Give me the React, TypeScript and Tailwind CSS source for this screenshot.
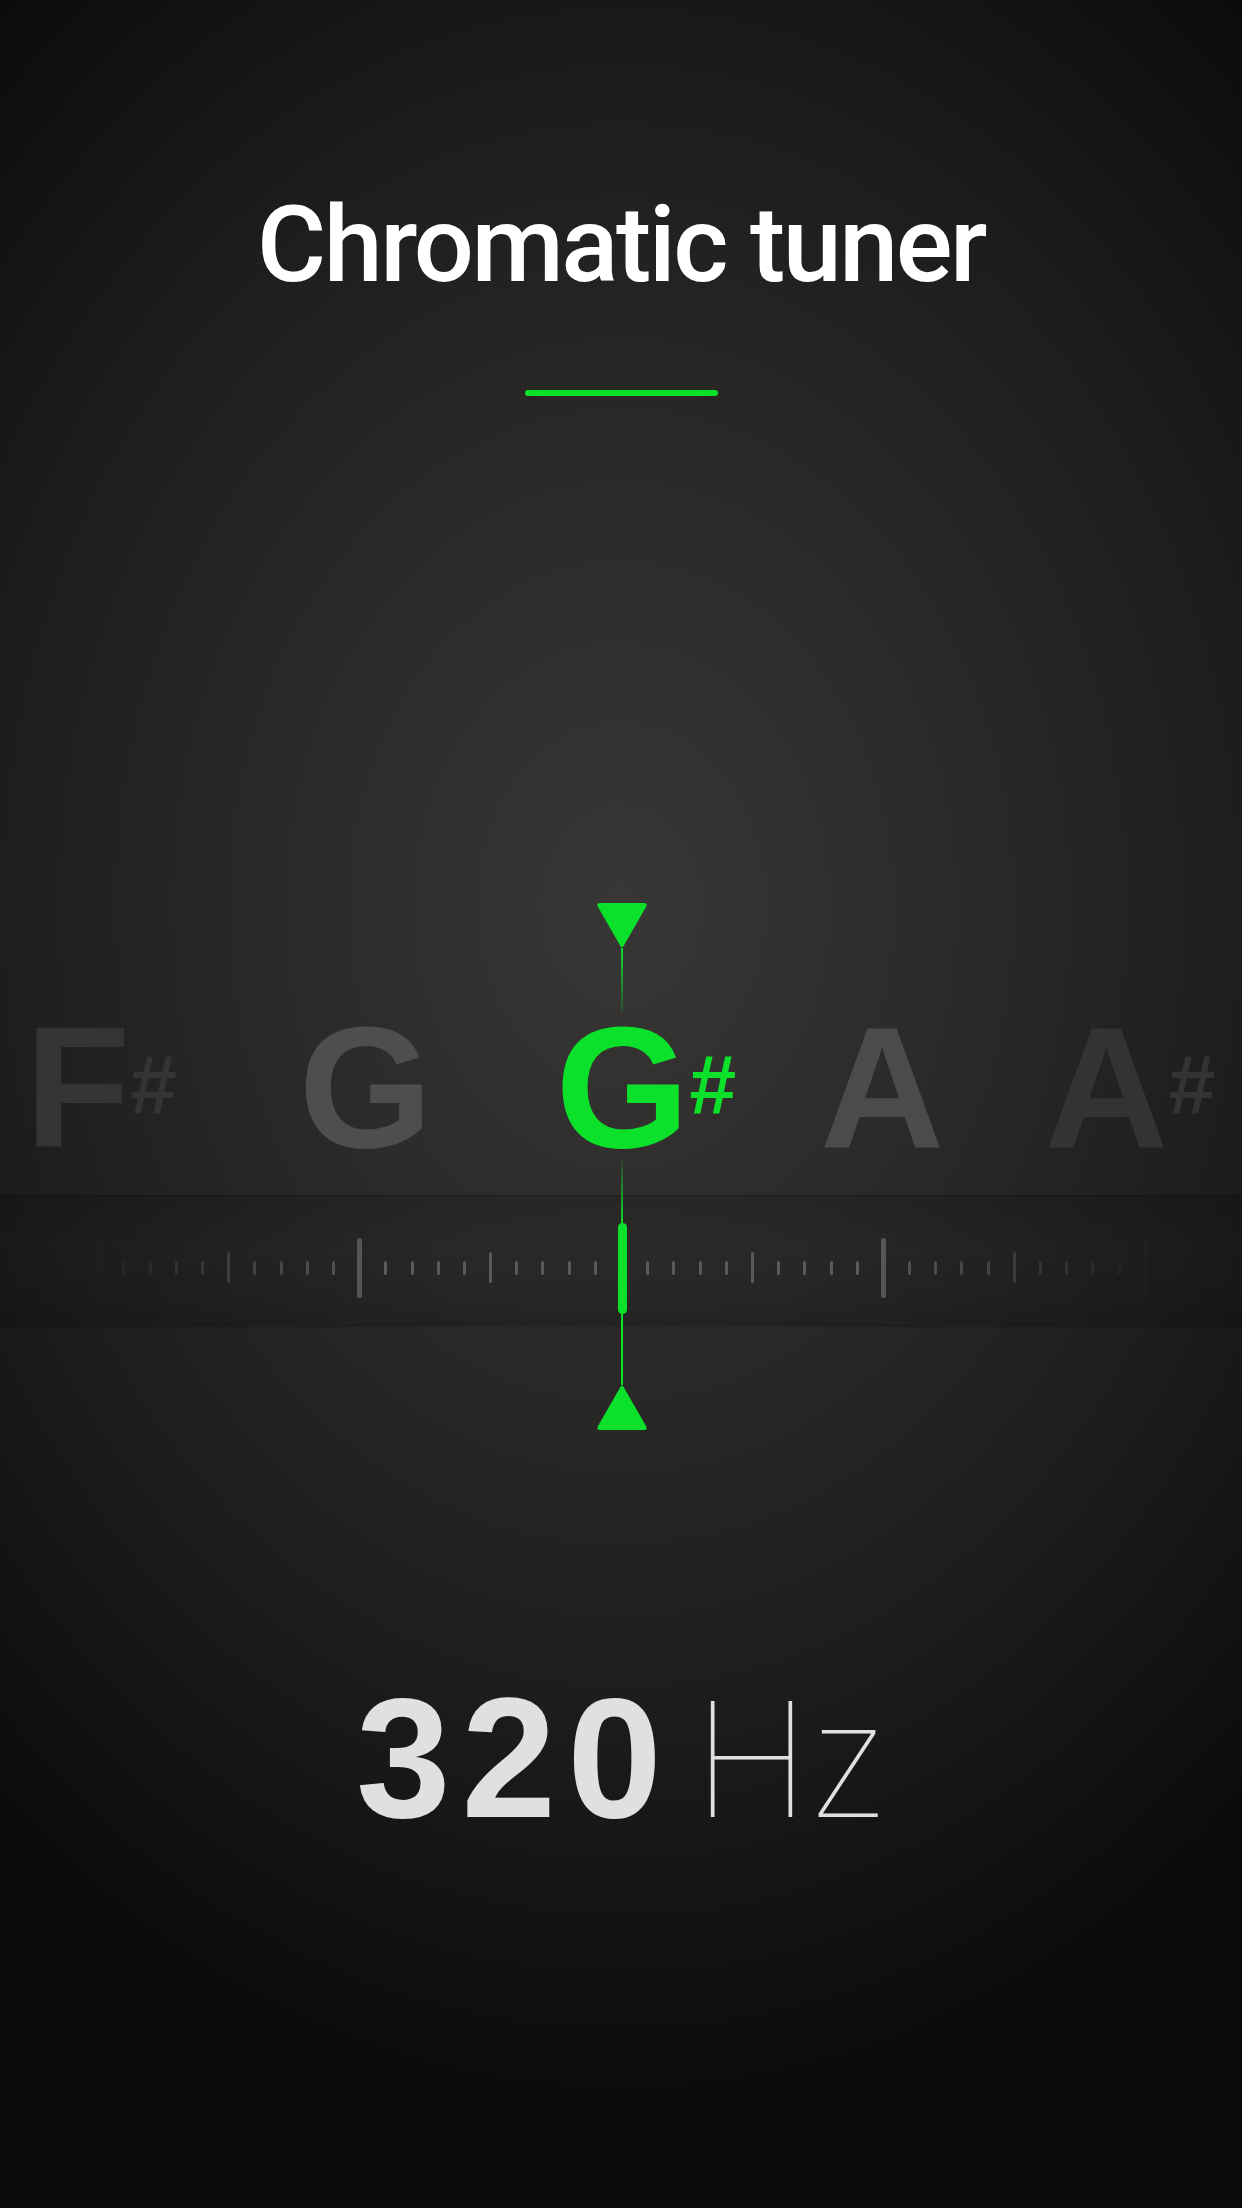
import React from 'react';

const GREEN = '#0be12a';

// tick marks around the center, one every 26.2px; every 5th is medium, every 10th is major
const ticks = Array.from({ length: 41 }, (_, k) => k - 20);

const Tick: React.FC<{ i: number }> = ({ i }) => {
  const major = i % 10 === 0;
  const medium = !major && i % 5 === 0;
  const fade = Math.max(0, Math.min(1, 1 - (Math.abs(i) - 9) / 11.5));
  return (
    <div className="w-[26.2px] flex justify-center">
      {i !== 0 && (
        <div
          className={`rounded-full bg-[#5a5a5a] ${
            major ? 'w-[5px] h-[60px]' : medium ? 'w-[3px] h-[31px]' : 'w-[3px] h-[14px]'
          }`}
          style={{ opacity: fade }}
        />
      )}
    </div>
  );
};

const Note: React.FC<{ letter: string; sharp?: boolean; color: string; className?: string }> = ({
  letter,
  sharp,
  color,
  className = '',
}) => (
  <div className={`flex items-start ${color} ${className}`}>
    <span className="text-[172px] leading-none">{letter}</span>
    {sharp && <span className="mt-[42px] text-[84px] leading-none">#</span>}
  </div>
);

const Dial: React.FC = () => {
  return (
    <div className="relative w-full h-[560px]">
      {/* band with the cent scale */}
      <div className="absolute inset-x-0 top-[315px] h-[132px] pt-[12px] flex items-center justify-center bg-[linear-gradient(to_bottom,rgba(0,0,0,0.16),rgba(0,0,0,0.06)_40%,rgba(0,0,0,0.1)_80%,rgba(0,0,0,0.18))] border-t border-black/20">
        <div className="flex items-center pl-[1px]">
          {ticks.map((i) => (
            <Tick key={i} i={i} />
          ))}
        </div>
      </div>

      {/* note names */}
      <div className="absolute inset-x-0 top-[121px] flex items-start pl-[25px] font-['Liberation_Sans',Arial,sans-serif] font-bold">
        <Note letter="F" sharp color="text-[#343434]" />
        <Note letter="G" color="text-[#4e4e4e]" className="ml-[122px]" />
        <Note letter="G" sharp color="text-[#0be12a]" className="ml-[123px]" />
        <Note letter="A" color="text-[#4b4b4b]" className="ml-[84px]" />
        <Note letter="A" sharp color="text-[#333333]" className="ml-[100px]" />
      </div>

      {/* needle */}
      <div className="absolute left-[596px] top-[23px] w-[52px] flex flex-col items-center">
        <svg width="52" height="46" viewBox="0 0 52 46" className="-mb-[1px]">
          <path d="M4 0 H48 Q52 0 50 4 L27.6 43 Q26 45.5 24.4 43 L2 4 Q0 0 4 0 Z" fill={GREEN} />
        </svg>
        <div className="w-[2px] h-[64px] bg-[linear-gradient(to_bottom,#0be12a,rgba(11,225,42,0.12))]" />
        <div className="h-[148px]" />
        <div className="w-[2px] h-[63px] bg-[linear-gradient(to_bottom,rgba(11,225,42,0.12),#0be12a)]" />
        <div className="w-[9px] h-[91px] rounded-full bg-[#0be12a]" />
        <div className="w-[2px] h-[71px] bg-[#0be12a]" />
        <svg width="52" height="46" viewBox="0 0 52 46" className="-mt-[1px]">
          <path d="M4 46 H48 Q52 46 50 42 L27.6 3 Q26 0.5 24.4 3 L2 42 Q0 46 4 46 Z" fill={GREEN} />
        </svg>
      </div>
    </div>
  );
};

export default function App() {
  return (
    <div className="w-[1242px] h-[2208px] overflow-hidden flex flex-col items-center bg-[radial-gradient(950px_1200px_at_50%_41%,#393735_0%,#2b2a28_35%,#1d1d1d_66%,#0b0b0b_100%)]">
      <h1 className="mt-[192px] text-[106px] leading-none tracking-[-2.5px] text-white font-['Roboto',Arial,sans-serif] font-medium">
        Chromatic tuner
      </h1>
      <div className="mt-[92px] w-[193px] h-[6px] rounded-full bg-[#0be12a]" />

      <div className="mt-[484px] w-full">
        <Dial />
      </div>

      <div className="mt-[233px] flex items-baseline gap-[20px]">
        <span className="text-[170px] leading-none font-bold tracking-[11px] text-[#e0e0e0] font-['Liberation_Sans',Arial,sans-serif]">
          320
        </span>
        <span className="text-[160px] leading-none font-thin tracking-[-4px] text-[#e0e0e0] font-['Inter',sans-serif]">
          Hz
        </span>
      </div>
    </div>
  );
}
